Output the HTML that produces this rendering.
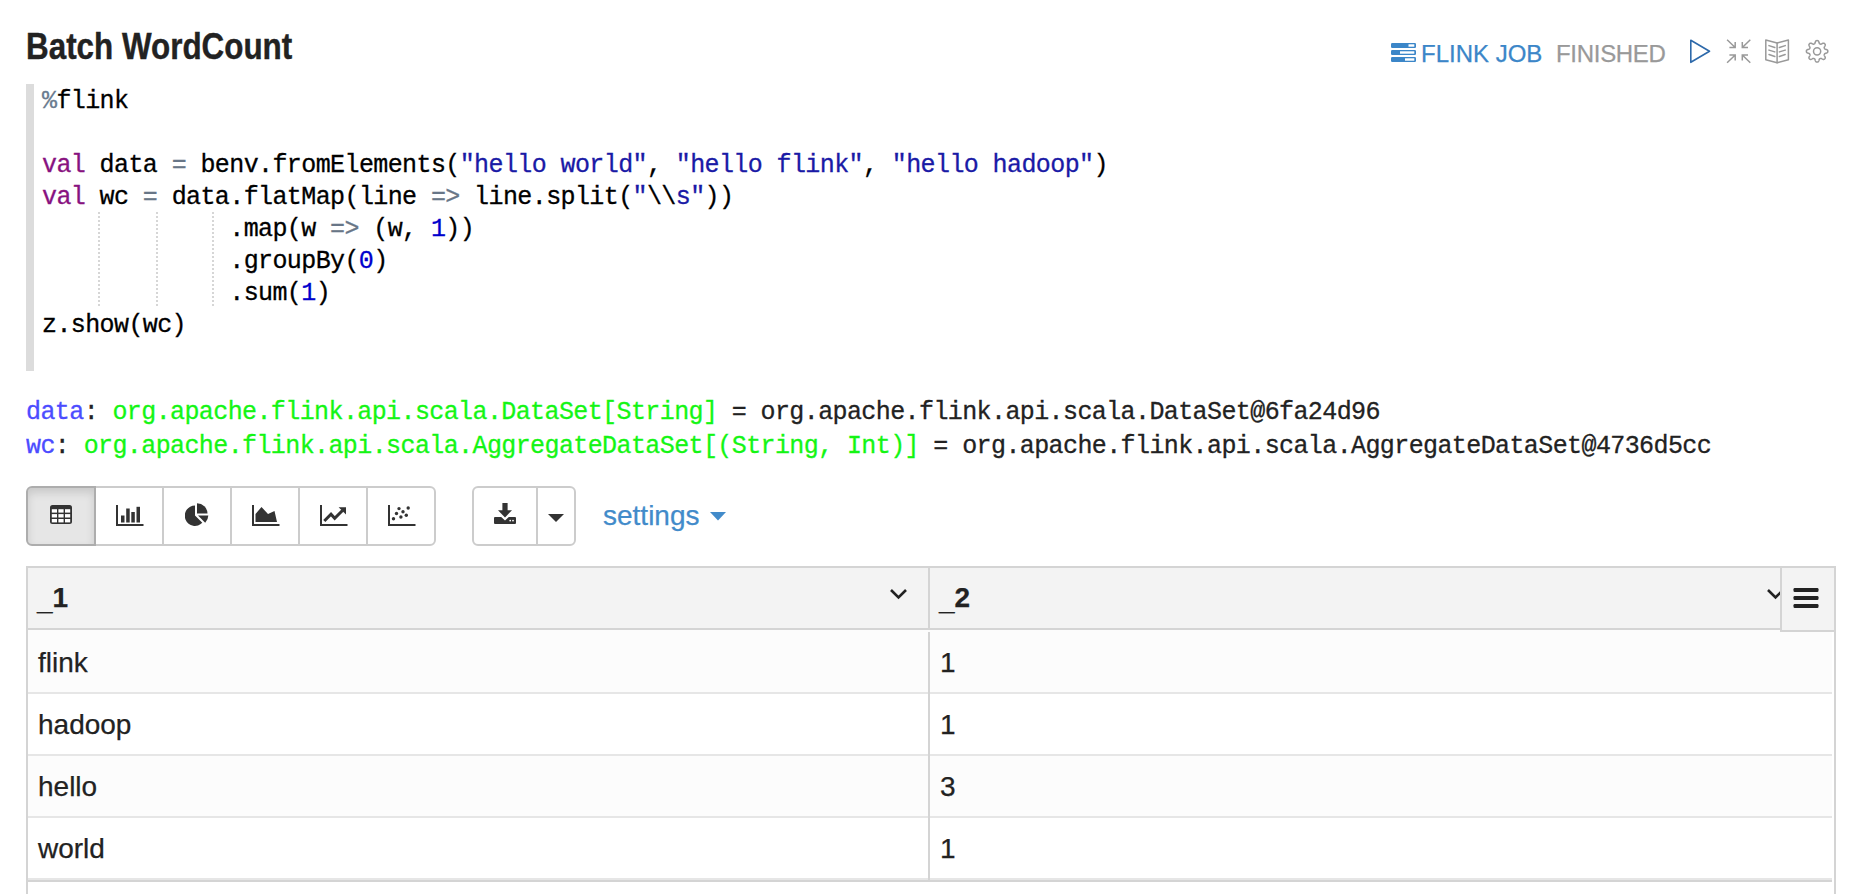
<!DOCTYPE html>
<html><head><meta charset="utf-8">
<style>
*{margin:0;padding:0;box-sizing:border-box}
html,body{width:1860px;height:894px;overflow:hidden;background:#fff}
body{position:relative;font-family:"Liberation Sans",sans-serif;color:#222}
.abs{position:absolute}
#title{left:26px;top:24.5px;font-size:36px;font-weight:bold;color:#222;white-space:nowrap;line-height:44px;transform-origin:0 0;transform:scaleX(0.872);-webkit-text-stroke:0.4px}
#hdr{left:0;top:0}
.hl{position:absolute;font-size:24px;line-height:30px;white-space:nowrap;-webkit-text-stroke:0.25px}
#bar{left:26px;top:84px;width:8px;height:287px;background:#dcdcdc}
#code{left:42px;top:86px;font-family:"Liberation Mono",monospace;font-size:25px;letter-spacing:-0.6px;line-height:32px;-webkit-text-stroke:0.3px;white-space:pre;color:#000}
.kw{color:#881280}.op{color:#687687}.str{color:#1a1aa6}.num{color:#0000cd}.pc{color:#6a7b8f}
.guide{position:absolute;top:212px;height:94px;width:0;border-left:2px dotted #d6d6d6}
#out{left:26px;top:396px;font-family:"Liberation Mono",monospace;font-size:25px;letter-spacing:-0.6px;line-height:34px;-webkit-text-stroke:0.3px;white-space:pre;color:#222}
.ob{color:#4c4cff}.og{color:#14f514}
.btn{position:absolute;top:486px;height:60px;border:2px solid #ccc;background:#fff}
.btn svg{position:absolute}
#settings{left:603px;top:498px;font-size:28px;line-height:36px;color:#428bca;white-space:nowrap;-webkit-text-stroke:0.25px}
.tb{position:absolute}
.cell{position:absolute;font-size:28px;line-height:34px;white-space:nowrap;color:#222;-webkit-text-stroke:0.25px}
</style></head><body>
<div id="title" class="abs">Batch WordCount</div>

<!-- header right -->
<svg class="abs" style="left:1391px;top:43px" width="25" height="20" viewBox="0 0 25 20">
  <rect x="0" y="0" width="25" height="5" rx="1.2" fill="#3b86c8"/>
  <rect x="17.5" y="1.3" width="5.8" height="2.4" fill="#fff"/>
  <rect x="0" y="7" width="25" height="5" rx="1.2" fill="#3b86c8"/>
  <rect x="9" y="8.3" width="14.3" height="2.4" fill="#fff"/>
  <rect x="0" y="14" width="25" height="5" rx="1.2" fill="#3b86c8"/>
  <rect x="14" y="15.3" width="9.3" height="2.4" fill="#fff"/>
</svg>
<div class="hl" style="left:1421px;top:39px;color:#3b86c8">FLINK JOB</div>
<div class="hl" style="left:1556px;top:39px;color:#999;letter-spacing:-0.3px">FINISHED</div>
<svg class="abs" style="left:1688px;top:38px" width="26" height="27" viewBox="0 0 26 27">
  <path d="M2.8 2.3 L21.5 13.3 L2.8 24.3 Z" fill="none" stroke="#2d69aa" stroke-width="1.6" stroke-linejoin="round"/>
</svg>
<svg class="abs" style="left:1725px;top:38px" width="28" height="27" viewBox="0 0 28 27">
  <g fill="none" stroke="#999" stroke-width="1.5">
    <path d="M2.1 1.8 L10.2 9.5 M10.2 4 V9.5 H4.4"/>
    <path d="M25.3 1.8 L17.3 9.5 M17.3 4 V9.5 H23"/>
    <path d="M2.1 24.7 L10.2 17 M10.2 22.5 V17 H4.4"/>
    <path d="M25.3 24.7 L17.3 17 M17.3 22.5 V17 H23"/>
  </g>
</svg>
<svg class="abs" style="left:1764px;top:38px" width="27" height="27" viewBox="0 0 27 27">
  <g fill="none" stroke="#999" stroke-width="1.5" stroke-linejoin="round" stroke-linecap="round">
    <path d="M1.8 2.1 L13.1 5 L24.4 2.1 V21.8 L13.1 24.7 L1.8 21.8 Z"/>
    <path d="M13.1 5 V24.7"/>
    <path d="M5 7.6 L10.8 9.5 M5 12.1 L10.8 13.9 M5 16.5 L10.8 18.5 M21.2 7.6 L15.4 9.5 M21.2 12.1 L15.4 13.9 M21.2 16.5 L15.4 18.5"/>
  </g>
</svg>
<svg class="abs" style="left:1804px;top:38px" width="27" height="27" viewBox="0 0 27 27">
  <g fill="none" stroke="#999" stroke-width="1.5" stroke-linejoin="round">
    <path d="M13.10 2.60 L13.38 2.60 L13.66 2.63 L13.93 2.70 L14.20 2.86 L14.44 3.13 L14.65 3.49 L14.83 3.94 L14.99 4.42 L15.12 4.87 L15.26 5.25 L15.40 5.53 L15.56 5.72 L15.74 5.84 L15.93 5.92 L16.12 6.00 L16.31 6.08 L16.51 6.16 L16.72 6.20 L16.97 6.18 L17.27 6.08 L17.63 5.91 L18.05 5.68 L18.49 5.46 L18.94 5.27 L19.35 5.16 L19.71 5.14 L20.00 5.22 L20.25 5.36 L20.46 5.54 L20.67 5.73 L20.86 5.94 L21.04 6.15 L21.18 6.40 L21.26 6.69 L21.24 7.05 L21.13 7.46 L20.94 7.91 L20.72 8.35 L20.49 8.77 L20.32 9.13 L20.22 9.43 L20.20 9.68 L20.24 9.89 L20.32 10.09 L20.40 10.28 L20.48 10.47 L20.56 10.66 L20.68 10.84 L20.87 11.00 L21.15 11.14 L21.53 11.28 L21.98 11.41 L22.46 11.57 L22.91 11.75 L23.27 11.96 L23.54 12.20 L23.70 12.47 L23.77 12.74 L23.80 13.02 L23.80 13.30 L23.80 13.58 L23.77 13.86 L23.70 14.13 L23.54 14.40 L23.27 14.64 L22.91 14.85 L22.46 15.03 L21.98 15.19 L21.53 15.32 L21.15 15.46 L20.87 15.60 L20.68 15.76 L20.56 15.94 L20.48 16.13 L20.40 16.32 L20.32 16.51 L20.24 16.71 L20.20 16.92 L20.22 17.17 L20.32 17.47 L20.49 17.83 L20.72 18.25 L20.94 18.69 L21.13 19.14 L21.24 19.55 L21.26 19.91 L21.18 20.20 L21.04 20.45 L20.86 20.66 L20.67 20.87 L20.46 21.06 L20.25 21.24 L20.00 21.38 L19.71 21.46 L19.35 21.44 L18.94 21.33 L18.49 21.14 L18.05 20.92 L17.63 20.69 L17.27 20.52 L16.97 20.42 L16.72 20.40 L16.51 20.44 L16.31 20.52 L16.12 20.60 L15.93 20.68 L15.74 20.76 L15.56 20.88 L15.40 21.07 L15.26 21.35 L15.12 21.73 L14.99 22.18 L14.83 22.66 L14.65 23.11 L14.44 23.47 L14.20 23.74 L13.93 23.90 L13.66 23.97 L13.38 24.00 L13.10 24.00 L12.82 24.00 L12.54 23.97 L12.27 23.90 L12.00 23.74 L11.76 23.47 L11.55 23.11 L11.37 22.66 L11.21 22.18 L11.08 21.73 L10.94 21.35 L10.80 21.07 L10.64 20.88 L10.46 20.76 L10.27 20.68 L10.08 20.60 L9.89 20.52 L9.69 20.44 L9.48 20.40 L9.23 20.42 L8.93 20.52 L8.57 20.69 L8.15 20.92 L7.71 21.14 L7.26 21.33 L6.85 21.44 L6.49 21.46 L6.20 21.38 L5.95 21.24 L5.74 21.06 L5.53 20.87 L5.34 20.66 L5.16 20.45 L5.02 20.20 L4.94 19.91 L4.96 19.55 L5.07 19.14 L5.26 18.69 L5.48 18.25 L5.71 17.83 L5.88 17.47 L5.98 17.17 L6.00 16.92 L5.96 16.71 L5.88 16.51 L5.80 16.32 L5.72 16.13 L5.64 15.94 L5.52 15.76 L5.33 15.60 L5.05 15.46 L4.67 15.32 L4.22 15.19 L3.74 15.03 L3.29 14.85 L2.93 14.64 L2.66 14.40 L2.50 14.13 L2.43 13.86 L2.40 13.58 L2.40 13.30 L2.40 13.02 L2.43 12.74 L2.50 12.47 L2.66 12.20 L2.93 11.96 L3.29 11.75 L3.74 11.57 L4.22 11.41 L4.67 11.28 L5.05 11.14 L5.33 11.00 L5.52 10.84 L5.64 10.66 L5.72 10.47 L5.80 10.28 L5.88 10.09 L5.96 9.89 L6.00 9.68 L5.98 9.43 L5.88 9.13 L5.71 8.77 L5.48 8.35 L5.26 7.91 L5.07 7.46 L4.96 7.05 L4.94 6.69 L5.02 6.40 L5.16 6.15 L5.34 5.94 L5.53 5.73 L5.74 5.54 L5.95 5.36 L6.20 5.22 L6.49 5.14 L6.85 5.16 L7.26 5.27 L7.71 5.46 L8.15 5.68 L8.57 5.91 L8.93 6.08 L9.23 6.18 L9.48 6.20 L9.69 6.16 L9.89 6.08 L10.08 6.00 L10.27 5.92 L10.46 5.84 L10.64 5.72 L10.80 5.53 L10.94 5.25 L11.08 4.87 L11.21 4.42 L11.37 3.94 L11.55 3.49 L11.76 3.13 L12.00 2.86 L12.27 2.70 L12.54 2.63 L12.82 2.60 Z"/>
    <circle cx="13.1" cy="13.3" r="3.6"/>
  </g>
</svg>

<!-- code -->
<div id="bar" class="abs"></div>
<div class="guide" style="left:98px"></div>
<div class="guide" style="left:156px"></div>
<div class="guide" style="left:212px"></div>
<div id="code" class="abs"><span class="pc">%</span>flink

<span class="kw">val</span> data <span class="op">=</span> benv.fromElements(<span class="str">"hello world"</span>, <span class="str">"hello flink"</span>, <span class="str">"hello hadoop"</span>)
<span class="kw">val</span> wc <span class="op">=</span> data.flatMap(line <span class="op">=&gt;</span> line.split(<span class="str">"</span>\\<span class="str">s"</span>))
             .map(w <span class="op">=&gt;</span> (w, <span class="num">1</span>))
             .groupBy(<span class="num">0</span>)
             .sum(<span class="num">1</span>)
z.show(wc)</div>

<!-- output -->
<div id="out" class="abs"><span class="ob">data</span>: <span class="og">org.apache.flink.api.scala.DataSet[String]</span> = org.apache.flink.api.scala.DataSet@6fa24d96
<span class="ob">wc</span>: <span class="og">org.apache.flink.api.scala.AggregateDataSet[(String, Int)]</span> = org.apache.flink.api.scala.AggregateDataSet@4736d5cc</div>

<!-- toolbar -->
<div class="btn" style="left:26px;width:70px;border-radius:6px 0 0 6px;background:#e6e6e6;border-color:#adadad;box-shadow:inset 0 5px 9px rgba(0,0,0,.125)"></div>
<div class="btn" style="left:94px;width:70px"></div>
<div class="btn" style="left:162px;width:70px"></div>
<div class="btn" style="left:230px;width:70px"></div>
<div class="btn" style="left:298px;width:70px"></div>
<div class="btn" style="left:366px;width:70px;border-radius:0 6px 6px 0"></div>
<div class="btn" style="left:94px;width:2px;border:none;background:#adadad"></div>

<div class="btn" style="left:472px;width:66px;border-radius:6px 0 0 6px"></div>
<div class="btn" style="left:536px;width:40px;border-radius:0 6px 6px 0"></div>

<!-- icons -->
<svg class="tb" style="left:50px;top:505px" width="22" height="19" viewBox="0 0 22 19">
  <rect x="0" y="0" width="22" height="19" rx="2.5" fill="#333"/>
  <g fill="#fff">
    <rect x="1.8" y="4.2" width="5.2" height="3.4"/><rect x="8.4" y="4.2" width="5.2" height="3.4"/><rect x="15" y="4.2" width="5.2" height="3.4"/>
    <rect x="1.8" y="9.1" width="5.2" height="3.4"/><rect x="8.4" y="9.1" width="5.2" height="3.4"/><rect x="15" y="9.1" width="5.2" height="3.4"/>
    <rect x="1.8" y="14" width="5.2" height="3.4"/><rect x="8.4" y="14" width="5.2" height="3.4"/><rect x="15" y="14" width="5.2" height="3.4"/>
  </g>
</svg>
<svg class="tb" style="left:116px;top:505px" width="28" height="21" viewBox="0 0 28 21">
  <g fill="#333">
    <rect x="0" y="0" width="2" height="21"/><rect x="0" y="19" width="27.5" height="2"/>
    <rect x="5" y="10.5" width="3.5" height="7"/><rect x="10.2" y="3.5" width="3.5" height="14"/><rect x="15.3" y="7" width="3.5" height="10.5"/><rect x="20.5" y="1.8" width="3.5" height="15.7"/>
  </g>
</svg>
<svg class="tb" style="left:185px;top:503px" width="24" height="23" viewBox="0 0 24 23">
  <g fill="#333">
    <path d="M10 2.5 V12.5 L17.3 19.8 A10.2 10.2 0 1 1 10 2.5 Z"/>
    <path d="M12 0.3 A10.5 10.5 0 0 1 22.5 10.6 L12 10.6 Z"/>
    <path d="M13 12.6 H23.3 A10.3 10.3 0 0 1 20.2 19.8 Z"/>
  </g>
</svg>
<svg class="tb" style="left:252px;top:505px" width="28" height="21" viewBox="0 0 28 21">
  <g fill="#333">
    <rect x="0" y="0" width="2" height="21"/><rect x="0" y="19" width="27.5" height="2"/>
    <path d="M3.5 17 V9 L9.5 2 L16 9 L22.5 6 L25 17 Z"/>
  </g>
</svg>
<svg class="tb" style="left:320px;top:505px" width="28" height="21" viewBox="0 0 28 21">
  <g fill="#333">
    <rect x="0" y="0" width="2" height="21"/><rect x="0" y="19" width="27.5" height="2"/>
  </g>
  <path d="M4.3 16 L11 9.2 L14.7 13.3 L22.5 5.5" fill="none" stroke="#333" stroke-width="3"/>
  <path d="M18.6 2.2 H26 V9.6 Z" fill="#333"/>
</svg>
<svg class="tb" style="left:388px;top:505px" width="28" height="22" viewBox="0 0 28 22">
  <g fill="#333">
    <rect x="0" y="0" width="2" height="21"/><rect x="0" y="19" width="27.5" height="2"/>
    <circle cx="5.5" cy="13.8" r="1.7"/><circle cx="8.5" cy="8.5" r="1.7"/><circle cx="11" cy="3.6" r="1.7"/>
    <circle cx="12.9" cy="12" r="1.7"/><circle cx="15" cy="6.7" r="1.7"/><circle cx="18.3" cy="10.3" r="1.7"/><circle cx="20.2" cy="3" r="1.7"/>
  </g>
</svg>
<svg class="tb" style="left:494px;top:503px" width="22" height="21" viewBox="0 0 22 21">
  <g fill="#333">
    <rect x="8.4" y="0" width="5.2" height="8"/>
    <path d="M4 7.2 H18 L11 14.5 Z"/>
    <path d="M1 14 Q0 14 0 15 V19.8 Q0 21 1 21 H21 Q22 21 22 19.8 V15 Q22 14 21 14 H14.8 L11 17.6 L7.2 14 Z"/>
  </g>
  <circle cx="16.2" cy="17.6" r="0.9" fill="#fff"/><circle cx="19" cy="17.6" r="0.9" fill="#fff"/>
</svg>
<svg class="tb" style="left:548px;top:514px" width="16" height="8" viewBox="0 0 16 8">
  <path d="M0 0 H16 L8 8 Z" fill="#333"/>
</svg>
<div id="settings" class="abs">settings</div>
<svg class="tb" style="left:710px;top:512px" width="16" height="9" viewBox="0 0 16 9">
  <path d="M0 0 H16 L8 8.5 Z" fill="#428bca"/>
</svg>

<!-- table -->
<div class="abs" style="left:26px;top:566px;width:1810px;height:328px;border:2px solid #d4d4d4;border-bottom:none;background:#fff"></div>
<div class="abs" style="left:28px;top:568px;width:1806px;height:60px;background:#f3f3f3"></div>
<div class="abs" style="left:28px;top:628px;width:1806px;height:2px;background:#d4d4d4"></div>
<div class="abs" style="left:928px;top:568px;width:2px;height:62px;background:#d4d4d4"></div>

<div class="abs" style="left:28px;top:630px;width:1804px;height:62px;background:#fcfcfc"></div>
<div class="abs" style="left:28px;top:692px;width:1804px;height:2px;background:#e6e6e6"></div>
<div class="abs" style="left:28px;top:754px;width:1804px;height:62px;background:#fcfcfc"></div>
<div class="abs" style="left:28px;top:816px;width:1804px;height:2px;background:#e6e6e6"></div>
<div class="abs" style="left:28px;top:754px;width:1804px;height:2px;background:#e6e6e6"></div>
<div class="abs" style="left:28px;top:878px;width:1804px;height:2px;background:#e6e6e6"></div>
<div class="abs" style="left:28px;top:880px;width:1804px;height:2px;background:#d4d4d4"></div>
<div class="abs" style="left:928px;top:632px;width:2px;height:250px;background:#d4d4d4"></div>

<div class="cell" style="left:37px;top:581px;font-weight:bold"><span style="position:relative;top:3px">_</span>1</div>
<div class="cell" style="left:939px;top:581px;font-weight:bold"><span style="position:relative;top:3px">_</span>2</div>
<svg class="abs" style="left:889px;top:587px" width="19" height="14" viewBox="0 0 19 14">
  <path d="M2 3 L9.5 10.5 L17 3" fill="none" stroke="#222" stroke-width="2.6"/>
</svg>
<svg class="abs" style="left:1766px;top:587px" width="19" height="14" viewBox="0 0 19 14">
  <path d="M2 3 L9.5 10.5 L17 3" fill="none" stroke="#222" stroke-width="2.6"/>
</svg>
<div class="abs" style="left:1780px;top:566px;width:56px;height:66px;border:2px solid #d4d4d4;background:#f3f3f3"></div>
<svg class="abs" style="left:1793px;top:587px" width="26" height="22" viewBox="0 0 26 22">
  <g fill="#222"><rect x="0.5" y="1" width="25" height="4" rx="1.2"/><rect x="0.5" y="9" width="25" height="4" rx="1.2"/><rect x="0.5" y="17" width="25" height="4" rx="1.2"/></g>
</svg>

<div class="cell" style="left:38px;top:646px">flink</div>
<div class="cell" style="left:940px;top:646px">1</div>
<div class="cell" style="left:38px;top:708px">hadoop</div>
<div class="cell" style="left:940px;top:708px">1</div>
<div class="cell" style="left:38px;top:770px">hello</div>
<div class="cell" style="left:940px;top:770px">3</div>
<div class="cell" style="left:38px;top:832px">world</div>
<div class="cell" style="left:940px;top:832px">1</div>
</body></html>
